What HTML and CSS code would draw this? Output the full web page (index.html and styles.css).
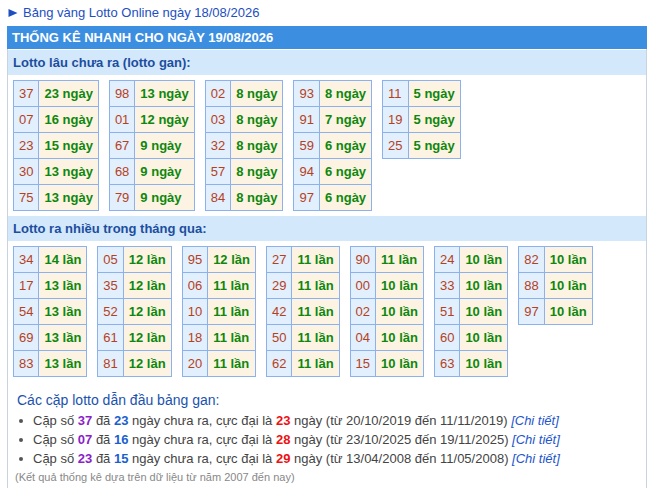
FILE: index.html
```html
<!DOCTYPE html>
<html lang="vi">
<head>
<meta charset="utf-8">
<link rel="stylesheet" href="styles.css">
</head>
<body>
<div class="page">
  <div class="toplink"><svg class="arrow" width="10" height="10" viewBox="0 0 10 10"><path d="M0.5 1 L9.5 5 L0.5 9 Z" fill="#1d4fc2"/></svg>Bảng vàng Lotto Online ngày 18/08/2026</div>
  <div class="wrap">
    <div class="head">THỐNG KÊ NHANH CHO NGÀY 19/08/2026</div>
    <div class="box">
      <div class="sub">Lotto lâu chưa ra (lotto gan):</div>
      <div class="tables">
        <table><tr><td class="n">37</td><td class="v">23 ngày</td></tr><tr><td class="n">07</td><td class="v">16 ngày</td></tr><tr><td class="n">23</td><td class="v">15 ngày</td></tr><tr><td class="n">30</td><td class="v">13 ngày</td></tr><tr><td class="n">75</td><td class="v">13 ngày</td></tr></table>
        <table><tr><td class="n">98</td><td class="v">13 ngày</td></tr><tr><td class="n">01</td><td class="v">12 ngày</td></tr><tr><td class="n">67</td><td class="v">9 ngày</td></tr><tr><td class="n">68</td><td class="v">9 ngày</td></tr><tr><td class="n">79</td><td class="v">9 ngày</td></tr></table>
        <table><tr><td class="n">02</td><td class="v">8 ngày</td></tr><tr><td class="n">03</td><td class="v">8 ngày</td></tr><tr><td class="n">32</td><td class="v">8 ngày</td></tr><tr><td class="n">57</td><td class="v">8 ngày</td></tr><tr><td class="n">84</td><td class="v">8 ngày</td></tr></table>
        <table><tr><td class="n">93</td><td class="v">8 ngày</td></tr><tr><td class="n">91</td><td class="v">7 ngày</td></tr><tr><td class="n">59</td><td class="v">6 ngày</td></tr><tr><td class="n">94</td><td class="v">6 ngày</td></tr><tr><td class="n">97</td><td class="v">6 ngày</td></tr></table>
        <table><tr><td class="n">11</td><td class="v">5 ngày</td></tr><tr><td class="n">19</td><td class="v">5 ngày</td></tr><tr><td class="n">25</td><td class="v">5 ngày</td></tr></table>
      </div>
      <div class="sub">Lotto ra nhiều trong tháng qua:</div>
      <div class="tables">
        <table><tr><td class="n">34</td><td class="v">14 lần</td></tr><tr><td class="n">17</td><td class="v">13 lần</td></tr><tr><td class="n">54</td><td class="v">13 lần</td></tr><tr><td class="n">69</td><td class="v">13 lần</td></tr><tr><td class="n">83</td><td class="v">13 lần</td></tr></table>
        <table><tr><td class="n">05</td><td class="v">12 lần</td></tr><tr><td class="n">35</td><td class="v">12 lần</td></tr><tr><td class="n">52</td><td class="v">12 lần</td></tr><tr><td class="n">61</td><td class="v">12 lần</td></tr><tr><td class="n">81</td><td class="v">12 lần</td></tr></table>
        <table><tr><td class="n">95</td><td class="v">12 lần</td></tr><tr><td class="n">06</td><td class="v">11 lần</td></tr><tr><td class="n">10</td><td class="v">11 lần</td></tr><tr><td class="n">18</td><td class="v">11 lần</td></tr><tr><td class="n">20</td><td class="v">11 lần</td></tr></table>
        <table><tr><td class="n">27</td><td class="v">11 lần</td></tr><tr><td class="n">29</td><td class="v">11 lần</td></tr><tr><td class="n">42</td><td class="v">11 lần</td></tr><tr><td class="n">50</td><td class="v">11 lần</td></tr><tr><td class="n">62</td><td class="v">11 lần</td></tr></table>
        <table><tr><td class="n">90</td><td class="v">11 lần</td></tr><tr><td class="n">00</td><td class="v">10 lần</td></tr><tr><td class="n">02</td><td class="v">10 lần</td></tr><tr><td class="n">04</td><td class="v">10 lần</td></tr><tr><td class="n">15</td><td class="v">10 lần</td></tr></table>
        <table><tr><td class="n">24</td><td class="v">10 lần</td></tr><tr><td class="n">33</td><td class="v">10 lần</td></tr><tr><td class="n">51</td><td class="v">10 lần</td></tr><tr><td class="n">60</td><td class="v">10 lần</td></tr><tr><td class="n">63</td><td class="v">10 lần</td></tr></table>
        <table><tr><td class="n">82</td><td class="v">10 lần</td></tr><tr><td class="n">88</td><td class="v">10 lần</td></tr><tr><td class="n">97</td><td class="v">10 lần</td></tr></table>
      </div>
      <div class="pairs">
        <div class="pairs-title">Các cặp lotto dẫn đầu bảng gan:</div>
        <ul>
          <li>Cặp số <b class="p">37</b> đã <b class="b">23</b> ngày chưa ra, cực đại là <b class="r">23</b> ngày (từ 20/10/2019 đến 11/11/2019) <a class="more">[Chi tiết]</a></li>
          <li>Cặp số <b class="p">07</b> đã <b class="b">16</b> ngày chưa ra, cực đại là <b class="r">28</b> ngày (từ 23/10/2025 đến 19/11/2025) <a class="more">[Chi tiết]</a></li>
          <li>Cặp số <b class="p">23</b> đã <b class="b">15</b> ngày chưa ra, cực đại là <b class="r">29</b> ngày (từ 13/04/2008 đến 11/05/2008) <a class="more">[Chi tiết]</a></li>
        </ul>
        <div class="note">(Kết quả thống kê dựa trên dữ liệu từ năm 2007 đến nay)</div>
      </div>
    </div>
  </div>
</div>
</body>
</html>
```

FILE: styles.css
```css
html, body {
  margin: 0;
  padding: 0;
  background: #ffffff;
}
body {
  font-family: "Liberation Sans", Arial, sans-serif;
  font-size: 13px;
  color: #444444;
}
.page {
  padding-left: 7px;
}
.toplink {
  height: 26px;
  box-sizing: border-box;
  padding: 2px 0 0 1px;
  line-height: 22px;
  font-size: 13px;
  color: #1d4fc2;
}
.arrow {
  display: inline-block;
  vertical-align: -1px;
  margin-right: 5px;
}
.wrap {
  width: 640px;
}
.head {
  height: 23px;
  line-height: 23px;
  background: #3b8ee0;
  color: #ffffff;
  font-weight: bold;
  font-size: 13px;
  padding-left: 5px;
}
.box {
  border-left: 1px solid #c9d3e0;
  border-right: 1px solid #c9d3e0;
  padding-top: 1px;
  min-height: 438px;
}
.sub {
  height: 25px;
  line-height: 25px;
  background: #d4e8fc;
  color: #1c4e9e;
  font-weight: bold;
  font-size: 13px;
  padding-left: 5px;
}
.tables {
  display: flex;
  flex-wrap: wrap;
  align-items: flex-start;
  gap: 10px;
  padding: 5px;
}
table {
  border-collapse: collapse;
  font-size: 13px;
}
td {
  border: 1px solid #8cb1ef;
  padding: 5px;
  line-height: 15px;
  height: 15px;
  white-space: nowrap;
}
td.n {
  background: #e2effd;
  color: #b5411c;
}
td.v {
  background: #fdf3e2;
  color: #0e870e;
  font-weight: bold;
}
.pairs {
  padding: 9px 0 0 9px;
}
.pairs-title {
  font-size: 14px;
  line-height: 18px;
  color: #1a52ae;
  margin-bottom: 2px;
}
ul {
  list-style: none;
  margin: 0;
  padding: 0 0 0 16px;
}
li {
  position: relative;
  line-height: 19px;
  font-size: 13px;
  color: #444444;
}
li::before {
  content: "";
  position: absolute;
  left: -14px;
  top: 8px;
  width: 4px;
  height: 4px;
  border-radius: 50%;
  background: #555555;
}
b.p { color: #8b1fc8; }
b.b { color: #1a5fd0; }
b.r { color: #ee1111; }
.more {
  font-style: italic;
  color: #2255cc;
}
.note {
  margin-top: 2px;
  margin-left: -2px;
  font-size: 11px;
  line-height: 14px;
  color: #888888;
}
```
